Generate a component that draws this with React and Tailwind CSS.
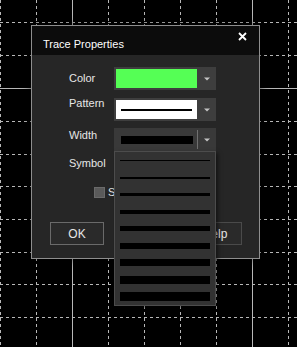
import React from "react";

const vx = [0.5, 36.5, 72.5, 108.5, 144.5, 180.5, 216.5, 252.5, 288.5];
const hy = [22.5, 55.5, 88.5, 121.5, 154.5, 186.5, 219.5, 252.5, 284.5, 317.5];
const solidX = [72.5, 252.5];
const solidY = [88.5];

function Grid() {
  return (
    <svg className="absolute inset-0" width="297" height="347" viewBox="0 0 297 347">
      {vx.map((x) => (
        <line
          key={"v" + x}
          x1={x}
          x2={x}
          y1={0}
          y2={347}
          stroke="#b8b8b8"
          strokeWidth="1"
          strokeDasharray={solidX.includes(x) ? undefined : "3 3"}
        />
      ))}
      {hy.map((y) => (
        <line
          key={"h" + y}
          x1={0}
          x2={297}
          y1={y}
          y2={y}
          stroke="#b8b8b8"
          strokeWidth="1"
          strokeDasharray={solidY.includes(y) ? undefined : "3 3"}
        />
      ))}
    </svg>
  );
}

function Arrow() {
  return (
    <svg width="6" height="4" viewBox="0 0 6 4">
      <path d="M0 0.5 H6 L3 3.5 Z" fill="#c4c4c4" />
    </svg>
  );
}

export default function App() {
  const widths = [1, 2, 3, 4, 5, 6, 7, 8, 9];
  return (
    <div
      className="relative w-[297px] h-[347px] bg-black overflow-hidden"
      style={{ fontFamily: '"Liberation Sans", Arial, sans-serif' }}
    >
      <Grid />
      <div className="absolute left-[31px] top-[25px] w-[229px] h-[234px] border border-[#8e8e8e] bg-[#262626] flex flex-col shadow-[0_0_10px_rgba(0,0,0,0.6)]">
        {/* Title bar */}
        <div className="h-[29px] bg-[#0c0c0c] flex justify-between items-start">
          <div className="pl-[11px] pt-[10px] leading-[16px] text-[11px] text-white">Trace Properties</div>
          <svg className="mt-[6px] mr-[12px]" width="9" height="9" viewBox="0 0 9 9">
            <path d="M1 1 L8 8 M8 1 L1 8" stroke="#ffffff" strokeWidth="1.8" />
          </svg>
        </div>
        {/* Body */}
        <div className="flex flex-col text-[11px] text-[#e6e6e6]">
          {/* Color */}
          <div className="flex items-start mt-[12px] pl-[37px]">
            <div className="w-[45px] leading-[23px]">Color</div>
            <div className="w-[102px] h-[23px] bg-[#3e3e3e] flex p-[2px] pr-0">
              <div className="w-[81px] h-[19px] bg-[#55ff55]" />
              <div className="flex-1 flex items-center justify-center">
                <Arrow />
              </div>
            </div>
          </div>
          {/* Pattern */}
          <div className="flex items-start mt-[8px] pl-[37px]">
            <div className="w-[45px] leading-[11px]">Pattern</div>
            <div className="w-[102px] h-[23px] bg-[#3e3e3e] flex p-[2px] pr-0">
              <div className="w-[81px] h-[19px] bg-white flex items-center px-[5px]">
                <div className="h-[2px] w-full bg-black" />
              </div>
              <div className="flex-1 flex items-center justify-center">
                <Arrow />
              </div>
            </div>
          </div>
          {/* Width */}
          <div className="flex items-start mt-[7px] pl-[37px]">
            <div className="w-[45px] leading-[11px] mt-[2px]">Width</div>
            <div className="relative w-[102px] h-[23px] bg-[#393939] flex">
              <div className="w-[83px] h-[23px] flex items-center pl-[7px] pr-[4px]">
                <div className="h-[8px] w-full bg-black" />
              </div>
              <div className="w-px my-[2px] bg-[#707070]" />
              <div className="flex-1 flex items-center justify-center">
                <Arrow />
              </div>
              {/* Dropdown list */}
              <div className="absolute left-0 top-full z-10 w-[102px] h-[155px] border border-[#4c4c4c] bg-[#323232] pt-[8px] overflow-hidden shadow-[2px_2px_4px_rgba(0,0,0,0.5)]">
                {widths.map((w) => (
                  <div key={w} className="h-[16.5px] px-[5px]">
                    <div className="bg-black w-full" style={{ height: w + "px" }} />
                  </div>
                ))}
              </div>
            </div>
          </div>
          {/* Symbol */}
          <div className="flex items-start mt-[7px] pl-[37px]">
            <div className="w-[45px] leading-[11px]">Symbol</div>
          </div>
          {/* Checkbox */}
          <div className="flex items-center mt-[18px] pl-[62px] gap-[3px]">
            <div className="w-[11px] h-[11px] bg-[#5a5a5a] border border-[#6a6a6a]" />
            <div className="leading-[11px]">Show Symbol</div>
          </div>
          {/* Buttons */}
          <div className="flex mt-[24px] pl-[18px] gap-[84px]">
            <div className="w-[54px] h-[23px] border border-[#6a6a6a] bg-[#2a2a2a] flex items-center justify-center text-[12px]">
              OK
            </div>
            <div className="w-[54px] h-[23px] border border-[#4a4a4a] bg-[#2a2a2a] flex items-center justify-center text-[12px]">
              Help
            </div>
          </div>
        </div>
      </div>
    </div>
  );
}
